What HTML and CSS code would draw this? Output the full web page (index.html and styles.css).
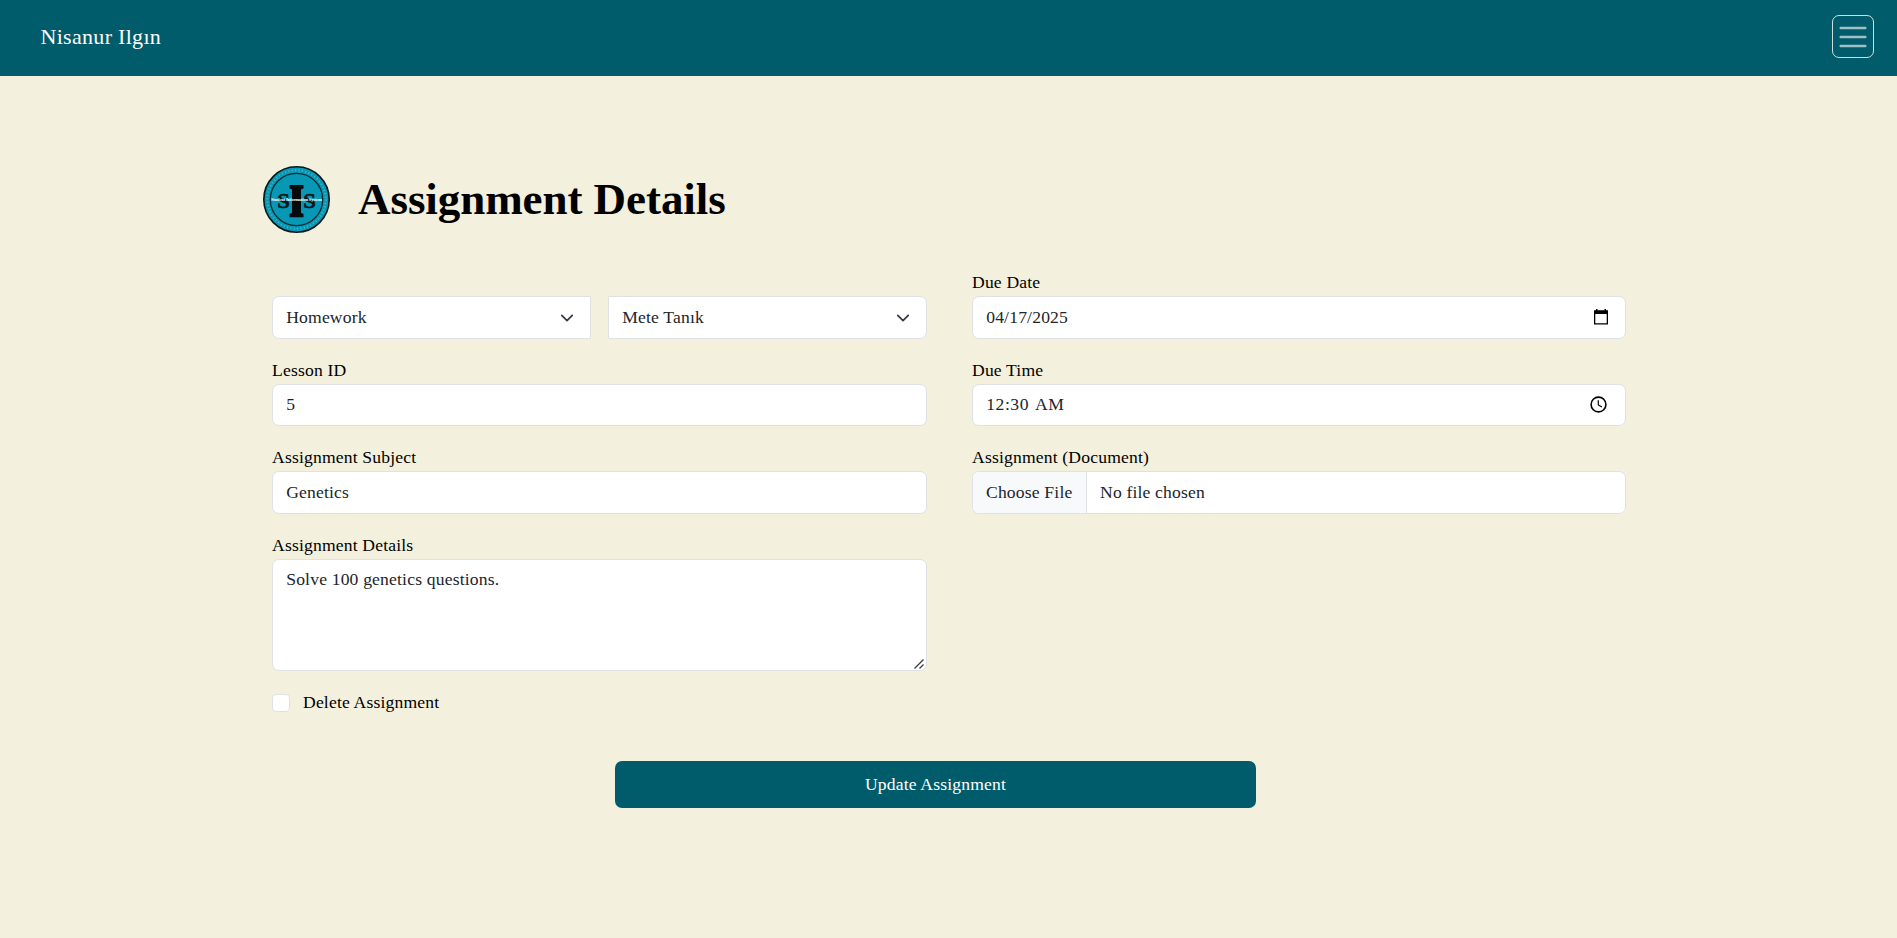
FILE: index.html
```html
<!DOCTYPE html>
<html lang="en">
<head>
<meta charset="utf-8">
<title>Assignment Details</title>
<link rel="stylesheet" href="styles.css">
</head>
<body>
<nav class="navbar">
  <span class="brand">Nisanur Ilgın</span>
  <button class="toggler" aria-label="Menu">
    <svg width="36" height="34" viewBox="0 0 32 30"><path stroke="#fff" stroke-opacity=".62" stroke-linecap="round" stroke-miterlimit="10" stroke-width="2.100" d="M5 7h22M5 15h22M5 23h22"/></svg>
  </button>
</nav>
<main class="page">
  <header class="heading">
    <svg class="logo" viewBox="0 0 67 67">
      <circle cx="33.5" cy="33.5" r="32.7" fill="#0698b4" stroke="#07171c" stroke-width="1.6"/>
      <circle cx="33.5" cy="33.5" r="29.2" fill="none" stroke="#7cc8d5" stroke-width="2.2" stroke-dasharray="1 2.4" opacity=".6"/>
      <circle cx="33.5" cy="33.5" r="26.2" fill="none" stroke="#062a33" stroke-width="1.3"/>
      <g font-family="Liberation Serif, serif" font-weight="bold" text-anchor="middle" fill="#07171c" stroke="#07171c" stroke-width=".6">
        <text transform="translate(20.500 41.500) scale(1.050 1)" font-size="21.500">S</text>
        <text transform="translate(46.500 41.500) scale(1.050 1)" font-size="21.500">S</text>
      </g>
      <path fill="#050b0d" d="M26.500 19h14v3.500l-2.500.8v23.700l2.500.8v3.500h-14v-3.500l2.500-.8V23.300l-2.500-.8z"/>
      <text x="33.500" y="35" font-family="Liberation Serif, serif" font-weight="bold" font-size="4.500" text-anchor="middle" fill="#fff" textLength="51">Student Information System</text>
    </svg>
    <h1 class="title">Assignment Details</h1>
  </header>
  <form class="form">
    <div class="columns">
      <div class="column">
        <div class="field">
          <span class="label"></span>
          <div class="pair">
            <div class="control tall first"><span>Homework</span><svg class="chevron" viewBox="0 0 16 16"><path fill="none" stroke="#343a40" stroke-linecap="round" stroke-linejoin="round" stroke-width="2" d="m2 5 6 6 6-6"/></svg></div>
            <div class="control tall last"><span>Mete Tanık</span><svg class="chevron" viewBox="0 0 16 16"><path fill="none" stroke="#343a40" stroke-linecap="round" stroke-linejoin="round" stroke-width="2" d="m2 5 6 6 6-6"/></svg></div>
          </div>
        </div>
        <div class="field">
          <label class="label" for="lesson">Lesson ID</label>
          <input class="control" id="lesson" value="5">
        </div>
        <div class="field">
          <label class="label" for="subject">Assignment Subject</label>
          <input class="control tall subject" id="subject" value="Genetics">
        </div>
        <div class="field">
          <label class="label" for="details">Assignment Details</label>
          <div class="area-wrap">
            <textarea class="control area" id="details">Solve 100 genetics questions.</textarea>
            <svg class="grip" viewBox="0 0 10 10"><path fill="none" stroke="#444" stroke-width="1.400" d="M.5 9.500l9-9M5.500 9.500l4-4"/></svg>
          </div>
        </div>
        <div class="check">
          <input class="checkbox" type="checkbox" id="delete">
          <label for="delete">Delete Assignment</label>
        </div>
      </div>
      <div class="column">
        <div class="field">
          <span class="label">Due Date</span>
          <div class="control tall"><span>04/17/2025</span><svg class="calendar" viewBox="0 0 14 16"><path fill="#000" fill-rule="evenodd" d="M2 0h1.500v1.300h7V0H12v1.300h2V15.500H0V1.300h2zM1.300 5v9.200h11.400V5z"/></svg></div>
        </div>
        <div class="field">
          <span class="label">Due Time</span>
          <div class="control"><span class="time">12:30 AM</span><svg class="clock" viewBox="0 0 17 17"><circle cx="8.500" cy="8.500" r="7.400" fill="none" stroke="#000" stroke-width="1.600"/><path fill="none" stroke="#000" stroke-width="1.200" d="M8.300 4.300v4.600l3.600 2.200"/></svg></div>
        </div>
        <div class="field">
          <span class="label">Assignment (Document)</span>
          <div class="control tall file"><span class="choose">Choose File</span><span class="chosen">No file chosen</span></div>
        </div>
      </div>
    </div>
    <button class="submit" type="button">Update Assignment</button>
  </form>
</main>
</body>
</html>
```
FILE: styles.css
```css
* { box-sizing: border-box; }
body {
  margin: 0;
  min-height: 938px;
  background: #f3f0dd;
  color: #000;
  font: 17.6px/26px "Liberation Serif", "Times New Roman", serif;
  letter-spacing: 0.17px;
}
.navbar {
  height: 76px;
  padding: 15px 23px 18px 40.5px;
  background: #005b6a;
  display: flex;
  justify-content: space-between;
  align-items: center;
}
.brand { color: #fff; font-size: 22px; letter-spacing: 0.3px; line-height: 33px; }
.toggler {
  width: 42px;
  height: 43px;
  padding: 0;
  border: 1px solid rgba(255, 255, 255, 0.8);
  border-radius: 7px;
  background: none;
  display: flex;
  align-items: center;
  justify-content: center;
}
.page { padding: 90px 271px 0 263px; }
.heading { display: flex; align-items: center; gap: 28px; height: 67px; }
.logo { width: 67px; height: 67px; }
.title { margin: 0; padding-bottom: 1px; font-size: 45px; line-height: 53px; letter-spacing: -0.06px; }
.form { padding: 37px 0 0 9px; }
.columns { display: grid; grid-template-columns: 655px 654px; gap: 45px; }
.column { display: flex; flex-direction: column; gap: 19px; }
.label { display: block; height: 26px; line-height: 25px; }
.pair { display: grid; grid-template-columns: 319px 319px; gap: 17px; }
.control {
  width: 100%;
  height: 42px;
  padding: 0 13.2px 2px;
  border: 1px solid #dee2e6;
  border-radius: 7px;
  background: #fff;
  color: #212529;
  font: inherit;
  letter-spacing: inherit;
  display: flex;
  align-items: center;
  justify-content: space-between;
}
.tall { height: 43px; }
.subject { padding-bottom: 0; }
.first { border-radius: 7px 0 0 7px; }
.last { border-radius: 0 7px 7px 0; }
.chevron { width: 14px; height: 14px; margin: 3px 3px 0 0; }
.calendar { width: 14px; height: 16px; margin-right: 4px; }
.clock { width: 17px; height: 17px; margin-right: 5px; }
.time { letter-spacing: 0.55px; word-spacing: 2px; }
.file { padding: 0; justify-content: flex-start; overflow: hidden; }
.choose {
  width: 114px;
  padding-left: 13px;
  line-height: 41px;
  background: #f8f9fa;
  border-right: 1px solid #dee2e6;
}
.chosen { padding-left: 13px; line-height: 41px; }
.area-wrap { position: relative; height: 112px; }
.area { display: block; height: 112px; padding: 6px 13.2px; resize: none; }
.grip { position: absolute; right: 3px; bottom: 2px; width: 10px; height: 10px; }
.check { display: flex; align-items: center; gap: 13px; margin: -1px 0 2px; height: 26px; }
.checkbox {
  appearance: none;
  width: 18px;
  height: 18px;
  margin: 1px 0 0;
  border: 1px solid #dee2e6;
  border-radius: 4px;
  background: #fff;
}
.submit {
  display: block;
  width: 641px;
  height: 47px;
  margin: 44px 0 0 343px;
  padding: 0 0 2px;
  border: 0;
  border-radius: 7px;
  background: #005b6a;
  color: #fff;
  font: inherit;
  letter-spacing: inherit;
}
```
